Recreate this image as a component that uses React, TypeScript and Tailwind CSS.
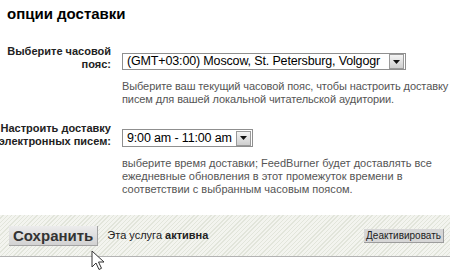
import React from 'react';

function DropArrow() {
  return (
    <div className="w-[15px] h-[15px] m-px shrink-0 flex items-center justify-center border border-[#9a9a9a] bg-gradient-to-b from-[#f4f4f4] to-[#cfcfcf]">
      <svg width="7" height="4" viewBox="0 0 7 4">
        <path d="M0 0h7L3.5 4z" fill="#111" />
      </svg>
    </div>
  );
}

export default function App() {
  return (
    <div className="relative w-[450px] h-[273px] overflow-hidden bg-white font-['Liberation_Sans',Arial,sans-serif] text-black">
      <h1 className="pl-[7px] pt-[5px] text-[15px] leading-[18px] font-bold">опции доставки</h1>

      {/* часовой пояс */}
      <div className="mt-[22px] flex">
        <div className="w-[111px] shrink-0 flex flex-col items-end text-[11px] leading-[13px] font-bold text-[#222]">
          <span className="whitespace-nowrap">Выберите часовой</span>
          <span className="whitespace-nowrap">пояс:</span>
        </div>
        <div className="ml-[11px] w-[328px] shrink-0 pt-[8px]">
          <div className="flex w-[284px] h-[17px] items-center border border-[#8f8f8f] bg-white">
            <span className="flex-1 min-w-0 pl-[4px] text-[12.5px] leading-[15px] tracking-[-0.15px] whitespace-nowrap overflow-hidden">
              (GMT+03:00) Moscow, St. Petersburg, Volgogr
            </span>
            <DropArrow />
          </div>
          <p className="mt-[10px] text-[11px] leading-[13px] tracking-[-0.1px] text-[#555]">
            Выберите ваш текущий часовой пояс, чтобы настроить доставку писем для вашей локальной читательской аудитории.
          </p>
        </div>
      </div>

      {/* время доставки */}
      <div className="mt-[16px] flex">
        <div className="w-[111px] shrink-0 flex flex-col items-end text-[11px] leading-[13px] font-bold text-[#222]">
          <span className="whitespace-nowrap">Настроить доставку</span>
          <span className="whitespace-nowrap">электронных писем:</span>
        </div>
        <div className="ml-[11px] w-[328px] shrink-0 pt-[7px]">
          <div className="flex w-[131px] h-[18px] items-center border border-[#8f8f8f] bg-white">
            <span className="flex-1 min-w-0 pl-[4px] text-[12.5px] leading-[15px] tracking-[-0.15px] whitespace-nowrap">
              9:00 am - 11:00 am
            </span>
            <DropArrow />
          </div>
          <p className="mt-[10px] w-[315px] text-[11px] leading-[13px] text-[#555]">
            выберите время доставки; FeedBurner будет доставлять все ежедневные обновления в этот промежуток времени в соответствии с выбранным часовым поясом.
          </p>
        </div>
      </div>

      {/* панель сохранения */}
      <div className="mt-[19px] h-[42px] flex items-center pl-[9px] pr-[6px] border-b border-[#b3b3b3] bg-[repeating-linear-gradient(135deg,#f3f4ef_0px,#f3f4ef_2px,#e2e5db_2px,#e2e5db_3px)]">
        <button className="h-[20px] px-[4px] text-[15px] leading-[20px] font-bold text-[#333] bg-gradient-to-b from-[#ececec] to-[#d2d2d2] border-r border-b border-[#a3a3a3]">
          Сохранить
        </button>
        <span className="ml-[9px] text-[11px] text-[#222]">
          Эта услуга <b>активна</b>
        </span>
        <button className="ml-auto h-[14px] px-[2px] text-[10px] leading-[14px] text-[#222] bg-[#d6d6d6] border-r border-b border-[#9c9c9c]">
          Деактивировать
        </button>
      </div>

      {/* курсор */}
      <svg className="absolute left-[91px] top-[250px]" width="14" height="21" viewBox="0 0 14 21">
        <path d="M1 1v16l4-4 3 6.5 2.5-1.2-3-6.3H13z" fill="#fff" stroke="#333" strokeWidth="1" strokeLinejoin="round" />
      </svg>
    </div>
  );
}
